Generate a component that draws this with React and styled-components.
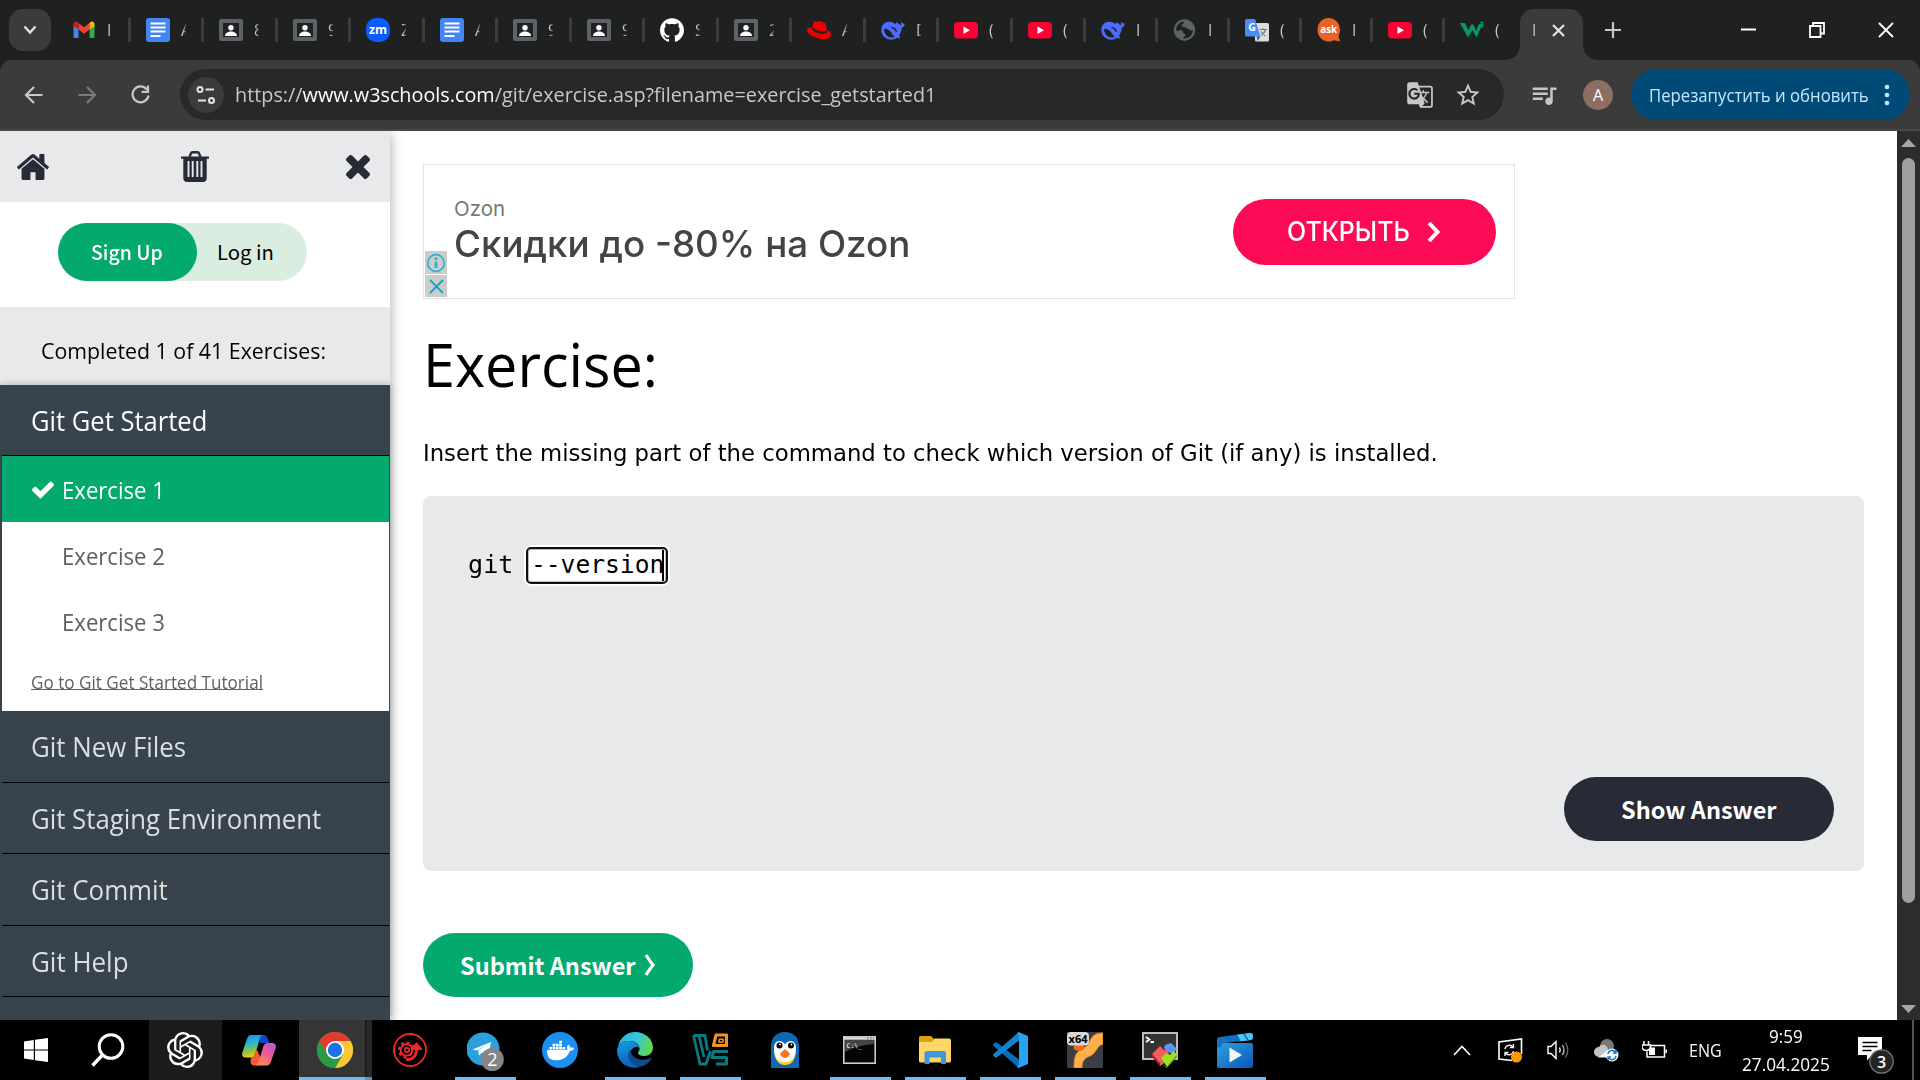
import React, { useLayoutEffect, useRef, useState } from "react";
import styled, { createGlobalStyle, css } from "styled-components";
import { SiOpenai, SiDocker, SiGithub, SiRedhat } from "react-icons/si";
import { MdStarBorder, MdGTranslate, MdQueueMusic } from "react-icons/md";

const ui = `"Open Sans", "Noto Sans", sans-serif`;
const source = `"Noto Sans CJK SC", "Noto Sans", sans-serif`;
const verdana = `"DejaVu Sans", sans-serif`;
const mono = `"DejaVu Sans Mono", monospace`;
const geo = `Inter, "Open Sans", sans-serif`;

const GlobalStyle = createGlobalStyle`
  * { box-sizing: border-box; }
  html, body { margin: 0; padding: 0; background: #fff; overflow: hidden; }
  svg { display: block; flex: none; }
`;

/* ---------- text set to a known measure ---------- */
const Measure = styled.span`
  display: block;
  flex: none;
  width: ${(p) => p.$w}px;
  height: ${(p) => p.$lh}px;
  line-height: ${(p) => p.$lh}px;
  font-family: ${(p) => p.$font || ui};
  font-size: ${(p) => p.$size}px;
  font-weight: ${(p) => p.$weight || 400};
  color: ${(p) => p.$color || "inherit"};
  white-space: pre;
`;
const Glyphs = styled.span`
  display: inline-block;
  transform-origin: 0 50%;
`;
function Fit({ w, size, lh, font, weight, color, children }) {
  const ref = useRef(null);
  const [k, setK] = useState(1);
  useLayoutEffect(() => {
    const n = ref.current.offsetWidth;
    if (n) setK(w / n);
  }, [w, children]);
  return (
    <Measure $w={w} $lh={lh || Math.round(size * 1.4)} $size={size} $font={font} $weight={weight} $color={color}>
      <Glyphs ref={ref} style={{ transform: `scaleX(${k})` }}>{children}</Glyphs>
    </Measure>
  );
}

/* ---------- shell ---------- */
const Screen = styled.div`
  width: 1920px; height: 1080px; overflow: hidden;
  display: flex; flex-direction: column;
  background: #1f2121; font-family: ${ui};
`;
const TabStrip = styled.div`
  height: 60px; flex: none; display: flex; align-items: stretch; background: #1f2121; color: #dedede;
`;
const TabSearch = styled.div`
  width: 42px; height: 42px; margin: 9px 6px 0 9px; border-radius: 14px; background: #3b3b3b;
  display: flex; align-items: center; justify-content: center;
`;
const Tab = styled.div`
  width: ${(p) => p.$w}px; flex: none; padding-left: 15px; display: flex; align-items: center; gap: 11px;
  ${(p) => p.$sep && css`background: linear-gradient(#3c3e3e, #3c3e3e) right 18px / 3px 24px no-repeat;`}
`;
const TabTitle = styled.span`
  width: 5px; overflow: hidden; font-size: 16px; line-height: 24px; white-space: nowrap; color: #c9c9c9;
  mask-image: linear-gradient(90deg, #000 40%, transparent 120%);
`;
const ActiveTab = styled.div`
  position: relative; width: 63px; margin-top: 9px; height: 51px; border-radius: 14px 14px 0 0; background: #3b3b3b;
  display: flex; align-items: center; padding: 0 18px 9px 12px; justify-content: space-between;
  &::before, &::after { content: ""; position: absolute; bottom: 0; width: 14px; height: 14px; }
  &::before { left: -14px; background: radial-gradient(circle at 0 0, transparent 13.5px, #3b3b3b 14px); }
  &::after { right: -14px; background: radial-gradient(circle at 100% 0, transparent 13.5px, #3b3b3b 14px); }
`;
const NewTab = styled.div`
  width: 50px; margin-left: 5px; display: flex; align-items: center; justify-content: center;
`;
const WindowControls = styled.div`
  margin-left: auto; display: flex; align-items: center; gap: 53px; padding-right: 26px;
`;
const Toolbar = styled.div`
  height: 71px; flex: none; display: flex; align-items: flex-start; background: #3b3b3b; border-radius: 12px 12px 0 0;
  border-bottom: 2px solid #484848; padding: 9px 10px 0 24px;
`;
const NavButtons = styled.div`
  width: 156px; height: 51px; display: flex; align-items: center; gap: 34.5px; flex: none;
`;
const Omnibox = styled.div`
  width: 1324px; flex: none; height: 51px; border-radius: 26px; background: #282828; display: flex; align-items: center;
  padding: 0 22px 0 8px; color: #c7c7c7;
`;
const SiteInfo = styled.div`
  width: 36px; height: 36px; border-radius: 50%; background: #3b3b3b; display: flex; align-items: center; justify-content: center; margin-right: 11px;
`;
const Host = styled.span`color: #fff;`;
const OmniActions = styled.div`margin-left: auto; display: flex; align-items: center; gap: 20px;`;
const Tools = styled.div`height: 51px; display: flex; align-items: center; margin-left: auto;`;
const Avatar = styled.div`
  width: 30px; height: 30px; margin: 0 18px 0 24px; border-radius: 50%; background: #8d6e63; color: #fff;
  font-size: 16px; line-height: 30px; text-align: center;
`;
const Relaunch = styled.div`
  width: 279px; height: 51px; border-radius: 26px; background: #004a77; color: #c2e7ff; display: flex; align-items: center;
  padding: 0 20px 0 18px; justify-content: space-between;
`;

/* ---------- page ---------- */
const Page = styled.div`height: 889px; flex: none; display: flex; background: #fff; overflow: hidden;`;
const Sidebar = styled.aside`
  width: 390px; flex: none; display: flex; flex-direction: column; background: #fff; z-index: 1;
  box-shadow: 0 2px 12px rgba(0, 0, 0, 0.35);
`;
const SideHead = styled.div`
  height: 71px; flex: none; background: #e7e9eb; display: grid; grid-template-columns: 164px 1fr auto; align-items: center; padding: 0 20px 0 17px;
`;
const Account = styled.div`height: 105px; flex: none; padding: 21px 0 0 58px;`;
const AccountPill = styled.div`
  width: 249px; height: 58px; border-radius: 29px; background: #d9eee1; display: flex;
`;
const SignUp = styled.div`
  width: 139px; height: 58px; border-radius: 29px; background: #04aa6d; padding: 0 0 2px 33px; display: flex; align-items: center; margin-right: 20px;
`;
const LogIn = styled.div`display: flex; align-items: center; padding-bottom: 2px;`;
const Progress = styled.div`height: 78px; flex: none; background: #e7e9eb; padding: 26px 0 0 41px;`;
const NavList = styled.nav`
  flex: 1; background: #38444d; padding: 0 1px 0 2px; box-shadow: 0 0 8px rgba(0, 0, 0, 0.25);
`;
const NavTitle = styled.div`
  height: ${(p) => p.$h || 71}px; border-bottom: 1px solid #000; padding: 16px 0 0 29px;
`;
const Lessons = styled.div`height: 255px; background: #fff;`;
const Lesson = styled.div`
  height: 66px; padding: 2px 0 0 30px; display: flex; align-items: center;
  background: ${(p) => (p.$on ? "#04aa6d" : "#fff")}; color: ${(p) => (p.$on ? "#fff" : "#5f5f5f")};
`;
const Tick = styled.div`width: 30px; display: flex;`;
const TutorialLink = styled.a`
  display: block; margin: 16px 0 0 29px; color: #616161; width: 232px; height: 23px;
  background: linear-gradient(#616161, #616161) 0 19px / 100% 1px no-repeat;
`;
const Main = styled.main`flex: 1; padding: 33px 0 0 33px;`;
const Ad = styled.section`
  width: 1092px; height: 135px; border: 1px solid #e4e4e4; display: flex; align-items: flex-start;
`;
const AdMarks = styled.div`display: flex; flex-direction: column; gap: 1px; margin: 86px 7px 0 1px;`;
const AdMark = styled.div`
  width: 22px; height: ${(p) => p.$h}px; background: #ccc; display: flex; align-items: center; justify-content: center;
`;
const AdText = styled.div`display: flex; flex-direction: column; padding-top: 31px;`;
const AdButton = styled.div`
  width: 263px; height: 66px; margin: 34px 18px 0 auto; border-radius: 33px; background: #fb0a55; color: #fff;
  display: flex; align-items: center; gap: 17px; padding-left: 54px;
`;
const Heading = styled.h1`margin: 17px 0 0 0; height: 96px; display: flex; align-items: center; font-weight: 400; color: #000;`;
const Prompt = styled.p`margin: 24px 0 0; height: 34px;`;
const CodeBox = styled.section`
  width: 1441px; height: 375px; margin-top: 26px; border-radius: 8px; background: #e7e9eb;
  display: flex; flex-direction: column; justify-content: space-between; padding: 51px 30px 30px 45px;
`;
const CodeLine = styled.div`display: flex; align-items: flex-start;`;
const Answer = styled.div`
  width: 142px; height: 37px; margin-left: 13px; background: #fff; border: 2px solid #101010; border-radius: 5px;
  box-shadow: 0 0 0 2px #fff, inset 0 0 0 1px #bbb; display: flex; align-items: flex-start; padding: 0 0 0 3px;
`;
const Caret = styled.i`width: 2px; height: 31px; background: #000; margin: 1px 0 0 -2px;`;
const PillButton = styled.div`
  width: 270px; height: 64px; border-radius: 32px; background: ${(p) => p.$bg}; color: #fff;
  display: flex; align-items: center; padding-left: ${(p) => p.$pl}px; gap: 8px;
  align-self: ${(p) => p.$end ? "flex-end" : "auto"}; margin-top: ${(p) => p.$mt || 0}px;
`;
const Scrollbar = styled.div`
  width: 23px; flex: none; background: #2c2c2c; display: flex; flex-direction: column; align-items: center; padding: 8px 0 7px;
`;
const Thumb = styled.div`width: 13px; height: 745px; border-radius: 7px; background: #9f9f9f; margin: 11px 0 auto;`;

/* ---------- taskbar ---------- */
const Taskbar = styled.div`height: 60px; flex: none; background: #000; display: flex; color: #fff;`;
const Task = styled.div`
  width: ${(p) => p.$w || 75}px; flex: none; display: flex; align-items: center; justify-content: center;
  padding-right: ${(p) => p.$pr || 1}px;
  ${(p) => p.$bg && css`background: ${p.$bg};`}
  ${(p) => p.$open && css`background: linear-gradient(#76b9ed, #76b9ed) center bottom / 61px 3px no-repeat;`}
`;
const ChromeTask = styled.div`
  width: 73px; margin: 0 1px 0 2px; flex: none; padding-left: 18px; display: flex; align-items: center;
  background: linear-gradient(#76b9ed, #76b9ed) 0 bottom / 66px 3px no-repeat,
    linear-gradient(#5f94bd, #5f94bd) right bottom / 7px 3px no-repeat,
    linear-gradient(90deg, #353535 66px, #1c1c1c 66px, #1c1c1c 68px, #292929 68px);
`;
const Tray = styled.div`margin-left: auto; display: flex; align-items: center;`;
const TrayItem = styled.div`width: ${(p) => p.$w}px; display: flex; align-items: center; flex: none;`;
const Clock = styled.div`
  width: 116px; height: 60px; display: flex; flex-direction: column; align-items: center; justify-content: space-between; padding: 3px 29px 2px 0;
`;
const ShowDesktop = styled.div`width: 8px; height: 60px; border-left: 2px solid #555;`;

/* ---------- icons ---------- */
const Gmail = () => (
  <svg width="24" height="24" viewBox="0 0 24 24">
    <path d="M1.5 20V7l5 4v9H3a1.5 1.5 0 0 1-1.5-1.5" fill="#4285f4" />
    <path d="M17.500 20v-9l5-4v11.500A1.500 1.500 0 0 1 21 20z" fill="#34a853" />
    <path d="M6.500 11.500V5L12 9.200 17.500 5v6.500L12 15.700z" fill="#ea4335" />
    <path d="M1.500 8.200V6c0-2 2.200-3 3.700-2L6.500 5v6.500z" fill="#c5221f" />
    <path d="M17.500 11.500V5l1.300-1c1.500-1 3.700 0 3.700 2v2.200z" fill="#fbbc04" />
  </svg>
);
const Docs = () => (
  <svg width="24" height="24" viewBox="0 0 24 24">
    <rect width="24" height="24" rx="3" fill="#4285f4" />
    <path d="M4.500 5.500h15M4.500 9.500h15M4.500 13.500h15M4.500 18h10" stroke="#fff" strokeWidth="2" />
  </svg>
);
const Person = () => (
  <svg width="24" height="24" viewBox="0 0 24 24">
    <rect y="1" width="24" height="22" rx="2" fill="#5f6368" />
    <rect x="4" y="5" width="16" height="14" fill="#202124" />
    <circle cx="12" cy="9.800" r="2.700" fill="#fff" />
    <path d="M6 18c0-3 3-4.500 6-4.500s6 1.500 6 4.500z" fill="#fff" />
  </svg>
);
const Zoom = () => (
  <svg width="24" height="24" viewBox="0 0 24 24">
    <rect width="24" height="24" rx="10" fill="#0b5cff" />
    <text x="12" y="15.500" fontSize="12" fontWeight="700" fill="#fff" textAnchor="middle" fontFamily="Open Sans" textLength="18" lengthAdjust="spacingAndGlyphs">zm</text>
  </svg>
);
const Whale = () => (
  <svg width="24" height="24" viewBox="0 0 24 24">
    <path d="M23.700 5.200c-1.700 1-3-.2-3.600-1.600-.3 1.400-.1 2.400.3 3.200-1.200.4-2.200-.5-3-1.600-.8 0-1.200-.7-2.200-1.300l-.6 2.300C11 3.300 6.500 3 3.400 5.300-.8 8.700-.6 15.300 3 18.700c4 3.900 9.500 3.800 13 1.100l2.500 1 .4-2.200c-.6-.3-.8-.6-.9-1.200 2-2.400 2.500-5 2.700-7.700 1.900-.6 2.900-2 3-4.500z" fill="#4d6bfe" />
    <path d="M3.200 11c3-.8 6 1.800 7.500 4.300 1 1.700 2 3 3.300 3.500-2.600 1.100-6 .7-8.300-1.400-1.800-1.700-2.700-3.900-2.500-6.400z" fill="#1f2121" />
    <path d="M10.500 9.500c2 .2 4.200 2 5 4.500" fill="none" stroke="#1f2121" strokeWidth="1.300" />
  </svg>
);
const YouTube = () => (
  <svg width="24" height="24" viewBox="0 0 24 24">
    <rect y="4" width="24" height="16.500" rx="4" fill="#ff0033" />
    <path d="M9.500 8.500l6.500 3.700-6.500 3.700z" fill="#fff" />
  </svg>
);
const Globe = () => (
  <svg width="24" height="24" viewBox="0 0 24 24">
    <circle cx="11.500" cy="12" r="9.600" fill="none" stroke="#5f6368" strokeWidth="2.200" />
    <path d="M2 11.500c1.500 1.700 3.500 1.600 4.800.8 1.500-.7 3.200.2 3 1.700-.1 1.300 1.300 1.600 2.500 1.900v2.400c-1 .4-2.500 1.700-2.800 3.300C5 21 2 17 2 11.500zM12.500 2.500c-2.500 1-1.500 3-3 3.700-1.300.6-1.200 2.200.2 2.500 1.300.2 3.200.3 4.200 1.600.9 1.100 2.400.6 3 1.800.4.900 2.800.3 4.100-.1 0-5-3.500-9.500-8.500-9.500z" fill="#5f6368" />
  </svg>
);
const Translate = () => (
  <svg width="24" height="24" viewBox="0 0 24 24">
    <rect x="10" y="5" width="14" height="18.500" rx="1.500" fill="#dcdcdc" />
    <path d="M1.500 1H10l5.500 17.500H1.500A1.500 1.500 0 0 1 0 17V2.500A1.500 1.500 0 0 1 1.500 1z" fill="#4b8df8" />
    <path d="M11.800 18.500h3.700L12.500 23z" fill="#3351a8" />
    <text x="7" y="13" fontSize="10.500" fontWeight="700" fill="#fff" textAnchor="middle" fontFamily="Open Sans">G</text>
    <path d="M14.500 11.500h7.500M18.200 10v1.500M20.500 11.500c-.7 3-2 4.500-4 6M16 13.500c1 2 2.500 3.300 4.500 4.500" fill="none" stroke="#6d7f83" strokeWidth="1.200" />
  </svg>
);
const Ask = () => (
  <svg width="24" height="24" viewBox="0 0 24 24">
    <path d="M11.500 0C5 0 .5 5.200.5 11.800S5 23.500 11.500 23.500c2.200 0 4-.4 5.500-1.300l6 1.300-1.500-5.500c1-1.800 1.500-3.800 1.500-6.200C23 5.200 18 0 11.500 0z" fill="#e8632a" />
    <text x="11.700" y="15" fontSize="10.500" fontWeight="700" fill="#fff" textAnchor="middle" fontFamily="Open Sans" textLength="17" lengthAdjust="spacingAndGlyphs">ask</text>
  </svg>
);
const W3 = () => (
  <svg width="24" height="24" viewBox="0 0 24 24">
    <path d="M0 5h5l3.500 7.500L11 6.500h2.500L16 13l3-7h3.500L16.500 19.500 12.500 12 8 19.500z" fill="#069a62" />
    <path d="M20 4.200h3l-1.800 2.200c2.400.2 2.200 3.200-.2 3.200-.6 0-1-.2-1.300-.6" fill="none" stroke="#069a62" strokeWidth="1.100" />
  </svg>
);
const Stroke = ({ w, h, d, sw = 2.2, c = "#c7c7c7", fill = "none" }) => (
  <svg width={w} height={h} viewBox={`0 0 ${w} ${h}`}><path d={d} stroke={c} strokeWidth={sw} fill={fill} /></svg>
);
const Tune = () => (
  <svg width="20" height="20" viewBox="0 0 20 20" fill="none" stroke="#e3e3e3" strokeWidth="2">
    <circle cx="4" cy="4.500" r="2.500" /><path d="M9.500 4.500H18M2 15.500h8" /><circle cx="15.500" cy="15.500" r="2.500" />
  </svg>
);
const Home = () => (
  <svg width="32" height="26" viewBox="92 250 1610 1290" preserveAspectRatio="none" fill="#282a35">
    <path d="M1472 992v480q0 26-19 45t-45 19h-384v-384h-256v384h-384q-26 0-45-19t-19-45v-480q0-1 .5-3t.5-3l575-474 575 474q1 2 1 6zm223-69l-62 74q-8 9-21 11h-3q-13 0-21-7l-692-577-692 577q-12 8-24 7-13-2-21-11l-62-74q-8-10-7-23.500t11-21.500l719-599q32-26 76-26t76 26l244 204v-195q0-14 9-23t23-9h192q14 0 23 9t9 23v408l219 182q10 8 11 21.500t-7 23.500z" />
  </svg>
);
const Trash = () => (
  <svg width="28" height="31" viewBox="0 0 28 31">
    <path d="M8.500 6l1.300-3.300A2 2 0 0 1 11.700 1.300h4.600a2 2 0 0 1 1.900 1.400L19.500 6" fill="none" stroke="#282a35" strokeWidth="2.400" />
    <path d="M0 5.500h28v2.300h-2.300V27a4 4 0 0 1-4 4H6.300a4 4 0 0 1-4-4V7.800H0z" fill="#282a35" />
    <path d="M7.500 10v16M11.700 10v16M16.300 10v16M20.500 10v16" stroke="#e7e9eb" strokeWidth="1.900" />
  </svg>
);
const Times = () => (
  <svg width="24" height="24" viewBox="302 366 1188 1188" fill="#282a35">
    <path d="M1490 1322q0 40-28 68l-136 136q-28 28-68 28t-68-28l-294-294-294 294q-28 28-68 28t-68-28l-136-136q-28-28-28-68t28-68l294-294-294-294q-28-28-28-68t28-68l136-136q28-28 68-28t68 28l294 294 294-294q28-28 68-28t68 28l136 136q28 28 28 68t-28 68l-294 294 294 294q28 28 28 68z" />
  </svg>
);
const Check = () => (
  <svg width="22" height="18" viewBox="121 334 1550 1188" fill="#fff">
    <path d="M1671 566q0 40-28 68l-724 724-136 136q-28 28-68 28t-68-28l-136-136-362-362q-28-28-28-68t28-68l136-136q28-28 68-28t68 28l294 295 656-657q28-28 68-28t68 28l136 136q28 28 28 68z" />
  </svg>
);
const Info = () => (
  <svg width="20" height="20" viewBox="0 0 20 20"><circle cx="10" cy="10" r="8.300" fill="none" stroke="#2bb5d0" strokeWidth="1.700" /><path d="M10 8.500v6.500" stroke="#2bb5d0" strokeWidth="2.800" /><circle cx="10" cy="5.700" r="1.500" fill="#2bb5d0" /></svg>
);
const Windows = () => (
  <svg width="24" height="24" viewBox="0 0 24 24" fill="#fff"><path d="M0 3.400l9.800-1.400v9.500H0zM11 1.800L24 0v11.500H11zM0 12.600h9.800V22L0 20.600zM11 12.600h13V24l-13-1.800z" /></svg>
);
const Search = () => (
  <svg width="34" height="34" viewBox="0 0 34 34" fill="none" stroke="#fff" strokeWidth="3"><circle cx="20" cy="13.500" r="11.800" /><path d="M11.500 22L1.500 32.500" strokeWidth="3.500" /></svg>
);
const Copilot = () => (
  <svg width="34" height="32" viewBox="0 0 34 32">
    <defs>
      <linearGradient id="cpA" x1="0" y1="0" x2="0.200" y2="1"><stop offset="0" stopColor="#1b8ff2" /><stop offset=".4" stopColor="#25b5d8" /><stop offset=".75" stopColor="#8bc34a" /><stop offset="1" stopColor="#f2c811" /></linearGradient>
      <linearGradient id="cpB" x1="1" y1="0" x2="0.300" y2="1"><stop offset="0" stopColor="#a65eea" /><stop offset=".45" stopColor="#e8559e" /><stop offset="1" stopColor="#ff8b4d" /></linearGradient>
    </defs>
    <path d="M17 1h5c2 0 3 1 3.600 3l1.500 5h-9z" fill="#1344c4" />
    <path d="M9.500 1h12c-2 0-3 1.500-3.600 3.500L13.500 19c-.8 3-2 4.500-4.500 4.500H3.500C.5 23.500-.5 21 .5 18L5 5c.8-2.500 2-4 4.500-4z" fill="url(#cpA)" />
    <path d="M9 23.500c2.500 0 3.700-1.500 4.500-4.500l1.200-4 4 9-3 7.500H12c-2 0-3-1.200-3.500-3z" fill="#f45b3b" />
    <path d="M24.500 31.500H13c2 0 3-1.500 3.600-3.500L21 13.500c.8-3 2-4.500 4.500-4.500h5C33.500 9 34.500 11.500 33.500 14.500L29 27.500c-.8 2.500-2 4-4.500 4z" fill="url(#cpB)" />
  </svg>
);
const Chrome = () => (
  <svg width="36" height="36" viewBox="0 0 36 36">
    <circle cx="18" cy="18" r="18" fill="#34a853" />
    <path d="M2.400 9A18 18 0 0 1 33.600 9H18l-7.800 13.500z" fill="#e33b2e" />
    <path d="M33.600 9A18 18 0 0 1 18 36l7.800-13.500L18 9z" fill="#fcc934" />
    <path d="M2.400 9A18 18 0 0 0 18 36l7.800-13.500H10.200z" fill="#2b9a47" />
    <circle cx="18" cy="18" r="9" fill="#fff" /><circle cx="18" cy="18" r="7.200" fill="#1a73e8" />
  </svg>
);
const RedGear = () => (
  <svg width="36" height="36" viewBox="0 0 36 36" fill="none" stroke="#f0262d">
    <circle cx="18" cy="18" r="16" strokeWidth="1.800" />
    <circle cx="14.500" cy="18" r="5.800" strokeWidth="2" /><circle cx="14.500" cy="18" r="7.400" strokeWidth="2.400" strokeDasharray="2.900 2.910" />
    <circle cx="15" cy="18" r="2.200" strokeWidth="1.700" />
    <path d="M15 27.500c6.500.5 10-4 9.500-11" stroke="#000" strokeWidth="6" /><path d="M14 27.500c7.500 1 11-4.500 10.500-12" strokeWidth="2.800" /><path d="M19.500 17.500l5-7 5.500 7z" fill="#f0262d" />
  </svg>
);
const Telegram = () => (
  <svg width="37" height="41" viewBox="2 -1 37 41">
    <circle cx="18" cy="18" r="16.500" fill="#2aa1dc" />
    <path d="M7.500 18.500L26 11l-3 15-6-4.500-3 3-.8-5L22 13.500l-10 6z" fill="#fff" />
    <circle cx="27.300" cy="28.500" r="11.500" fill="#858585" />
    <text x="27.300" y="35" fontSize="18" fill="#fff" textAnchor="middle" fontFamily="Open Sans">2</text>
  </svg>
);
const Whaler = styled.div`
  width: 36px; height: 36px; border-radius: 50%; background: #1d8ff0; color: #fff; display: flex; align-items: center; justify-content: center;
`;
const Edge = () => (
  <svg width="36" height="36" viewBox="0 0 36 36">
    <defs>
      <linearGradient id="eA" x1="0" y1="0.300" x2="1" y2="0.600"><stop offset="0" stopColor="#2fb3ea" /><stop offset=".5" stopColor="#35c8d8" /><stop offset="1" stopColor="#66d944" /></linearGradient>
      <linearGradient id="eB" x1="0" y1="0" x2="0.300" y2="1"><stop offset="0" stopColor="#1b9de2" /><stop offset="1" stopColor="#0a62b8" /></linearGradient>
    </defs>
    <path d="M1 14C3 6 10 0 18 0c10 0 18 7 18 15.500 0 5-4 8.500-9 8.500-4 0-6-1.500-6-3 0-1.200 1.500-1.500 1.500-4.500C22.500 12.500 18 9 12.500 9 7 9 3 11 1 14z" fill="url(#eA)" />
    <path d="M0 18C1 11.500 6 9 12 9c5.500 0 9 3 10 6.500-2-1.500-8-.5-8.500 5.500-.4 7 4 12 10 13.500C11 39 0 30 0 18z" fill="url(#eB)" />
    <path d="M13.500 17.500C11 20 10.500 25 13 29c3.500 6 12 7.500 18 2 1.500-1.300 2.800-3 3.500-4.500.2-.8-.5-1-1-.6C25 30 14 27 13.500 17.500z" fill="#114a8b" />
  </svg>
);
const VBox = () => (
  <svg width="36" height="34" viewBox="0 0 36 34" fill="none" strokeLinejoin="round">
    <path d="M1.500 2.500H13l2.500 15M1.500 2.500L8 31h6l4.500-13M7 3l5 21" stroke="#087a84" strokeWidth="2.800" />
    <path d="M36 18.500H21.500L20 24.500h14.500V31H24" stroke="#087a84" strokeWidth="3" />
    <path d="M24 2h10.500v10.500H21.500z" stroke="#f6921e" strokeWidth="3.200" /><path d="M27.500 6.300h3.500v2.800h-4.200z" stroke="#f6921e" strokeWidth="1.500" />
  </svg>
);
const Penguin = () => (
  <svg width="28" height="36" viewBox="0 0 28 36">
    <path d="M0 36V14C0 5.500 6 0 14 0s14 5.500 14 14v22z" fill="#0f68b4" />
    <path d="M3 17c0 10 4 16 11 16s11-6 11-16z" fill="#ffd02e" /><path d="M3 16c0 9 4 14 11 14s11-5 11-14c0-4-2-7-5.500-7S15 12 14 12s-2-3-5.500-3S3 12 3 16z" fill="#fff" />
    <circle cx="8.500" cy="13.500" r="3" /><circle cx="20" cy="13.500" r="3" /><circle cx="9" cy="12.500" r=".9" fill="#fff" /><circle cx="20.500" cy="12.500" r=".9" fill="#fff" />
    <path d="M14 17l5 4.500c-1 3-3 4.500-5 4.500s-4-1.500-5-4.500z" fill="#f7791d" />
  </svg>
);
const Cmd = () => (
  <svg width="33" height="28" viewBox="0 0 33 28">
    <rect x=".8" y=".8" width="31.400" height="26.400" fill="#050505" stroke="#c8ccd0" strokeWidth="1.600" />
    <path d="M1 2.500h31" stroke="#dfe3e6" strokeWidth="2.500" /><path d="M2 4h29v4Q14 9 2 16z" fill="#444" />
    <path d="M24 2h1.500M27 2h1.500M30 2h1" stroke="#444" strokeWidth="1.200" />
    <text x="3.500" y="11.500" fontSize="6.500" fill="#fff" fontFamily="DejaVu Sans Mono">C:\_</text>
  </svg>
);
const Explorer = () => (
  <svg width="32" height="28" viewBox="0 0 32 28">
    <path d="M0 1.500A1.500 1.500 0 0 1 1.500 0H12l3 3v3H0z" fill="#e0a10a" /><path d="M0 6h13l2.500-3.500H30A2 2 0 0 1 32 4v21a1.500 1.500 0 0 1-1.500 1.500h-29A1.500 1.500 0 0 1 0 25z" fill="#ffd766" />
    <path d="M5.500 28V17.500A2.500 2.500 0 0 1 8 15h16.500a2.500 2.500 0 0 1 2.500 2.500V28h-5v-6.500H10.500V28z" fill="#3f97dc" />
  </svg>
);
const VSCode = () => (
  <svg width="36" height="36" viewBox="0 0 36 36">
    <path d="M1 12.500l3-2.500 23 17.500V36L1 13.500z" fill="#0a6fb8" /><path d="M1 23.500l3 2.500 23-17.500V0L1 22.500z" fill="#1283cf" /><path d="M26.500 0L36 4v28l-9.500 4-1.500-1.500 2-1.500V3l-2-1.500z" fill="#27a4f2" />
  </svg>
);
const X64 = () => (
  <svg width="36" height="36" viewBox="0 0 36 36">
    <rect width="36" height="36" rx="1" fill="#3b3e48" /><path d="M36 1c-10 0-12 5-14 10-2 4-6 5-10 8-4 3-5 8-5 17h8c0-8 3-10 8-12 7-3 6-10 13-12z" fill="#ffb04a" stroke="#e58722" />
    <ellipse cx="12" cy="15.500" rx="5.500" ry="3.500" fill="#f46b12" /><rect width="22" height="13.500" rx="4" fill="#d8d8d8" />
    <text x="11" y="11" fontSize="11" fontWeight="700" textAnchor="middle" fontFamily="Open Sans" textLength="19" lengthAdjust="spacingAndGlyphs">x64</text>
  </svg>
);
const Moba = () => (
  <svg width="36" height="36" viewBox="0 0 36 36">
    <rect x="1" y="1" width="34" height="26" fill="#333" stroke="#bdbdbd" strokeWidth="2" />
    <path d="M4 5l3.500 2.500L4 10M8.500 10H12" stroke="#fff" strokeWidth="1.800" fill="none" />
    <path d="M10 22l8-8 4 4 3-1 3 8-7 7-3 2z" fill="#f25b60" /><path d="M23 13l6-2 6 6-5 5-5-3-3-3z" fill="#5b98f5" /><path d="M19 26l5-5 4 2 4-4 3 4-10 12z" fill="#9be31a" /><path d="M10 22l8 9v3l-8-9z" fill="#a81d28" /><path d="M18 31l7 4 10-12v2L25 36z" fill="#5f9f05" />
  </svg>
);
const Player = () => (
  <svg width="36" height="36" viewBox="0 0 36 36">
    <defs><linearGradient id="pl" x1="0" y1="0" x2="1" y2="1"><stop offset="0" stopColor="#2ba5e0" /><stop offset="1" stopColor="#0c54b5" /></linearGradient></defs>
    <rect y="11" width="36" height="25" rx="2" fill="url(#pl)" /><path d="M0 16V8a3 3 0 0 1 3-3L33 1q3 0 3 3v2q0 2-2 2L7 11q-2 0-3 4z" fill="#1470c8" /><path d="M20 2.800L33 1q3 0 3 3t-2 4l-12 1.500z" fill="#48ccf5" /><path d="M10 4l4 6M19 3l4 6M27 2l4 6" stroke="#0d66b8" strokeWidth="1.500" />
    <path d="M12.500 15.500v15L25 23z" fill="#f4f6fa" />
  </svg>
);
const Update = () => (
  <svg width="25" height="25" viewBox="0 0 25 25" fill="none" stroke="#fff" strokeWidth="1.600">
    <path d="M14 22.500L1 21V4l22.500-3v15" /><path d="M7 11a4.500 4.500 0 0 1 8-2M15.500 6v3.500H12M15.500 13a4.500 4.500 0 0 1-8 2M7 18v-3.500h3.500" strokeWidth="1.300" /><circle cx="18.500" cy="19" r="5.500" fill="#ff9800" stroke="none" />
  </svg>
);
const Speaker = () => (
  <svg width="23" height="20" viewBox="0 0 23 20" fill="none" stroke="#fff" strokeWidth="1.400"><path d="M1 6.500h3L9 1.500v17L4 13.500H1z" /><path d="M12.500 7.500q1.500 2.500 0 5" /><path d="M15.500 5q3 5 0 10" stroke="#bbb" /><path d="M18.500 2.500q4.500 7.500 0 15" stroke="#666" /></svg>
);
const Cloud = () => (
  <svg width="26" height="24" viewBox="0 -2 26 24"><circle cx="13" cy="6" r="7" fill="#777" /><path d="M5 17a5 5 0 0 1 0-10c2-3.500 8-3 9 2l4 8z" fill="#c4c4c4" /><path d="M4 17.500l9-7 5 7z" fill="#f2f2f2" /><circle cx="18" cy="15" r="6.500" fill="#fff" /><path d="M14 14a4 4 0 0 1 7.500-1.500M22 16a4 4 0 0 1-7.500 1.500M22 10v3h-3M14 20v-3h3" fill="none" stroke="#1677d2" strokeWidth="1.500" /></svg>
);
const Battery = () => (
  <svg width="25" height="18" viewBox="0 0 25 18" fill="none" stroke="#fff" strokeWidth="1.500"><path d="M9 4.500h13.500v11.500H5V10.500M24.300 8.500v3.500M2 0v4M6.500 0v4M0 4h8.500v2.500q-1 3-4.200 3T0 6.500z" /><rect x="7" y="6.500" width="6" height="7.500" fill="#fff" stroke="none" /></svg>
);
const Notice = () => (
  <svg width="37" height="48" viewBox="0 0 37 48">
    <path d="M0 11h24v18H14l-5 5.500V29H0z" fill="#fff" /><path d="M4.500 16.500h15M4.500 20.500h15M4.500 24.500h9" stroke="#000" strokeWidth="1.300" />
    <circle cx="23.500" cy="35.500" r="11.700" fill="#242424" stroke="#777" strokeWidth="1.300" />
    <text x="23.500" y="41.500" fontSize="16" fontWeight="600" fill="#fff" textAnchor="middle" fontFamily="Open Sans">3</text>
  </svg>
);

const TABS = [
  [Gmail, "I", 74], [Docs, "A", 73], [Person, "8", 74], [Person, "9", 73], [Zoom, "Z", 74], [Docs, "A", 73], [Person, "9", 74],
  [Person, "9", 73], [SiGithub, "S", 74], [Person, "2", 73], [SiRedhat, "A", 74], [Whale, "D", 73], [YouTube, "(", 74], [YouTube, "(", 73],
  [Whale, "I", 72], [Globe, "I", 72], [Translate, "(", 72], [Ask, "I", 71], [YouTube, "(", 72], [W3, "(", 75],
];
const brand = { 8: "#fff", 10: "#ee0000" };

export default function App() {
  return (
    <Screen>
      <GlobalStyle />
      <TabStrip>
        <TabSearch><Stroke w={14} h={10} d="M1.500 1.500L7 7.500l5.500-6" c="#e3e3e3" sw={2.4} /></TabSearch>
        {TABS.map(([Icon, t, w], i) => (
          <Tab key={i} $w={w} $sep={i < TABS.length - 1}>
            {brand[i] ? <Icon size={24} color={brand[i]} /> : <Icon />}
            <TabTitle>{t}</TabTitle>
          </Tab>
        ))}
        <ActiveTab>
          <TabTitle>I</TabTitle>
          <Stroke w={13} h={13} d="M1 1l11 11M12 1L1 12" c="#e3e3e3" />
        </ActiveTab>
        <NewTab><Stroke w={16} h={16} d="M8 0v16M0 8h16" /></NewTab>
        <WindowControls>
          <Stroke w={15} h={16} d="M0 7.500h15" c="#fff" sw={2} />
          <Stroke w={16} h={16} d="M1 4h10.500v11H1zM4 4V1h11v10.500h-3.500" c="#fff" sw={1.8} />
          <Stroke w={16} h={16} d="M1 1l14 14M15 1L1 15" c="#fff" sw={1.8} />
        </WindowControls>
      </TabStrip>
      <Toolbar>
        <NavButtons>
          <Stroke w={19} h={18} d="M18.500 9H2M10 1L2 9l8 8" />
          <Stroke w={19} h={18} d="M.5 9H17M9 1l8 8-8 8" c="#7b7b7b" />
          <Stroke w={19} h={19} d="M16 4.500A8 8 0 1 0 17.500 10.500M17 .5v6.300h-6.300" />
        </NavButtons>
        <Omnibox>
          <SiteInfo><Tune /></SiteInfo>
          <Fit w={701} size={20} lh={30}>https://<Host>www.w3schools.com</Host>/git/exercise.asp?filename=exercise_getstarted1</Fit>
          <OmniActions><MdGTranslate size={28} /><MdStarBorder size={28} /></OmniActions>
        </Omnibox>
        <Tools>
          <MdQueueMusic size={30} color="#c7c7c7" />
          <Avatar>A</Avatar>
          <Relaunch>
            <Fit w={220} size={17.500} lh={26}>Перезапустить и обновить</Fit>
            <svg width="6" height="24" viewBox="0 0 6 24" fill="#c2e7ff"><circle cx="3" cy="4" r="2.300" /><circle cx="3" cy="12" r="2.300" /><circle cx="3" cy="20" r="2.300" /></svg>
          </Relaunch>
        </Tools>
      </Toolbar>

      <Page>
        <Sidebar>
          <SideHead><Home /><Trash /><Times /></SideHead>
          <Account>
            <AccountPill>
              <SignUp><Fit w={72} size={20.3} lh={30} font={source} weight={500} color="#fff">Sign Up</Fit></SignUp>
              <LogIn><Fit w={57} size={20.3} lh={30} font={source} color="#000">Log in</Fit></LogIn>
            </AccountPill>
          </Account>
          <Progress><Fit w={285} size={22} lh={34} color="#000">Completed 1 of 41 Exercises:</Fit></Progress>
          <NavList>
            <NavTitle><Fit w={176} size={27} lh={40} color="#fff">Git Get Started</Fit></NavTitle>
            <Lessons>
              <Lesson $on><Tick><Check /></Tick><Fit w={103} size={23} lh={34}>Exercise 1</Fit></Lesson>
              <Lesson><Tick /><Fit w={103} size={23} lh={34}>Exercise 2</Fit></Lesson>
              <Lesson><Tick /><Fit w={103} size={23} lh={34}>Exercise 3</Fit></Lesson>
              <TutorialLink><Fit w={232} size={18} lh={24}>Go to Git Get Started Tutorial</Fit></TutorialLink>
            </Lessons>
            <NavTitle $h={72}><Fit w={155} size={27} lh={40} color="#ddd">Git New Files</Fit></NavTitle>
            <NavTitle><Fit w={290} size={27} lh={40} color="#ddd">Git Staging Environment</Fit></NavTitle>
            <NavTitle $h={72}><Fit w={137} size={27} lh={40} color="#ddd">Git Commit</Fit></NavTitle>
            <NavTitle><Fit w={98} size={27} lh={40} color="#ddd">Git Help</Fit></NavTitle>
          </NavList>
        </Sidebar>
        <Main>
          <Ad>
            <AdMarks>
              <AdMark $h={23}><Info /></AdMark>
              <AdMark $h={22}><Stroke w={15} h={15} d="M1 1l13 13M14 1L1 14" c="#00aecd" sw={1.8} /></AdMark>
            </AdMarks>
            <AdText>
              <Fit w={51} size={20.500} lh={26} font={geo} color="#777">Ozon</Fit>
              <Fit w={456} size={37} lh={44} font={geo} weight={500} color="#444">Скидки до -80% на Ozon</Fit>
            </AdText>
            <AdButton>
              <Fit w={123} size={27} lh={36} font={geo} weight={500}>ОТКРЫТЬ</Fit>
              <Stroke w={14} h={20} d="M2 1l8.500 9L2 19" c="#fff" sw={4} />
            </AdButton>
          </Ad>
          <Heading><Fit w={235} size={61} lh={84}>Exercise:</Fit></Heading>
          <Prompt><Fit w={1015} size={22.5} lh={34} font={verdana} color="#000">Insert the missing part of the command to check which version of Git (if any) is installed.</Fit></Prompt>
          <CodeBox>
            <CodeLine>
              <Fit w={45} size={24.6} lh={35} font={mono} color="#000">git</Fit>
              <Answer><Fit w={133} size={24.6} lh={31} font={mono} color="#000">--version</Fit><Caret /></Answer>
            </CodeLine>
            <PillButton $bg="#282a35" $pl={57} $end><Fit w={156} size={23.500} lh={36} font={source} weight={700}>Show Answer</Fit></PillButton>
          </CodeBox>
          <PillButton $bg="#04aa6d" $pl={37} $mt={62}>
            <Fit w={176} size={23.500} lh={36} font={source} weight={700}>Submit Answer</Fit>
            <Stroke w={12} h={22} d="M2 1q4 6.500 7 10-3 3.500-7 10" c="#fff" sw={3.2} />
          </PillButton>
        </Main>
        <Scrollbar>
          <Stroke w={15} h={8} d="M0 8l7.500-8L15 8z" sw={0} fill="#a5a5a5" />
          <Thumb />
          <Stroke w={15} h={8} d="M0 0l7.500 8L15 0z" sw={0} fill="#a5a5a5" />
        </Scrollbar>
      </Page>

      <Taskbar>
        <Task $w={72}><Windows /></Task>
        <Task $w={77} $pr={6}><Search /></Task>
        <Task $w={73} $bg="#1c1c1c"><SiOpenai size={36} /></Task>
        <Task><Copilot /></Task>
        <ChromeTask><Chrome /></ChromeTask>
        <Task $pr={2}><RedGear /></Task>
        <Task $open><Telegram /></Task>
        <Task><Whaler><SiDocker size={27} /></Whaler></Task>
        <Task $open><Edge /></Task>
        <Task $open><VBox /></Task>
        <Task><Penguin /></Task>
        <Task $open $pr={2}><Cmd /></Task>
        <Task $open><Explorer /></Task>
        <Task $open><VSCode /></Task>
        <Task $open><X64 /></Task>
        <Task $open><Moba /></Task>
        <Task $open><Player /></Task>
        <Tray>
          <TrayItem $w={45}><Stroke w={18} h={11} d="M1 10l8-8.500L17 10" c="#fff" sw={1.6} /></TrayItem>
          <TrayItem $w={49}><Update /></TrayItem>
          <TrayItem $w={47}><Speaker /></TrayItem>
          <TrayItem $w={48}><Cloud /></TrayItem>
          <TrayItem $w={47}><Battery /></TrayItem>
          <TrayItem $w={53}><Fit w={33} size={18} lh={26}>ENG</Fit></TrayItem>
          <Clock><Fit w={34} size={18} lh={27}>9:59</Fit><Fit w={88} size={18} lh={27}>27.04.2025</Fit></Clock>
          <TrayItem $w={54}><Notice /></TrayItem>
          <ShowDesktop />
        </Tray>
      </Taskbar>
    </Screen>
  );
}
